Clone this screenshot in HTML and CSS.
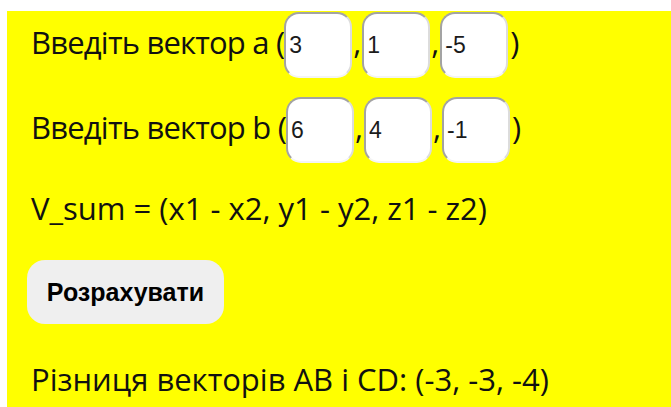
FILE: index.html
```html
<!DOCTYPE html>
<html lang="uk">
<head>
<meta charset="utf-8">
<title>Різниця векторів</title>
<link rel="stylesheet" href="styles.css">
</head>
<body>
<main class="panel">
  <div class="vec-row">
    <span class="label">Введіть вектор a (</span>
    <input class="coord" type="text" value="3">
    <span class="sep">,</span>
    <input class="coord" type="text" value="1">
    <span class="sep">,</span>
    <input class="coord" type="text" value="-5">
    <span class="label close">)</span>
  </div>
  <div class="vec-row second">
    <span class="label">Введіть вектор b (</span>
    <input class="coord" type="text" value="6">
    <span class="sep">,</span>
    <input class="coord" type="text" value="4">
    <span class="sep">,</span>
    <input class="coord" type="text" value="-1">
    <span class="label close">)</span>
  </div>
  <p class="formula">V_sum = (x1 - x2, y1 - y2, z1 - z2)</p>
  <button class="calc" type="button">Розрахувати</button>
  <p class="result">Різниця векторів AB і CD: (-3, -3, -4)</p>
</main>
</body>
</html>
```
FILE: styles.css
```css
html, body {
  background: #ffffff;
}

body {
  margin: 11px 0 0 7px;
}

.panel {
  background: #ffff00;
  padding: 1px 0 20px 24px;
  font-family: "Comic Sans MS", "Open Sans", sans-serif;
  font-size: 31px;
  color: #111;
  min-height: 400px;
  box-sizing: border-box;
}

.vec-row {
  display: flex;
  align-items: center;
  height: 66px;
}

.vec-row.second {
  margin-top: 19px;
}

.label {
  white-space: pre;
  letter-spacing: -0.8px;
  padding-bottom: 6px;
}

.close {
  margin-left: 2px;
}

.coord {
  width: 68px;
  height: 66px;
  box-sizing: border-box;
  border: 2px solid;
  border-color: #a3a3a3 #dcdcdc #f4f4f4 #a3a3a3;
  border-radius: 15px;
  background: #fff;
  padding: 0 0 0 3px;
  font-family: "Liberation Sans", Arial, sans-serif;
  font-size: 23px;
  color: #1b1b1b;
  outline: none;
}

.sep {
  width: 10px;
  text-align: center;
  padding-bottom: 6px;
}

.formula {
  margin: 23px 0 0;
  line-height: 44px;
}

.calc {
  display: block;
  margin: 30px 0 0 -4px;
  width: 197px;
  height: 64px;
  border: none;
  border-radius: 18px;
  background: #efefef;
  font-family: "Liberation Sans", Arial, sans-serif;
  font-weight: bold;
  font-size: 25px;
  color: #000;
  padding: 0;
}

.result {
  margin: 33px 0 0;
  line-height: 44px;
}
```
